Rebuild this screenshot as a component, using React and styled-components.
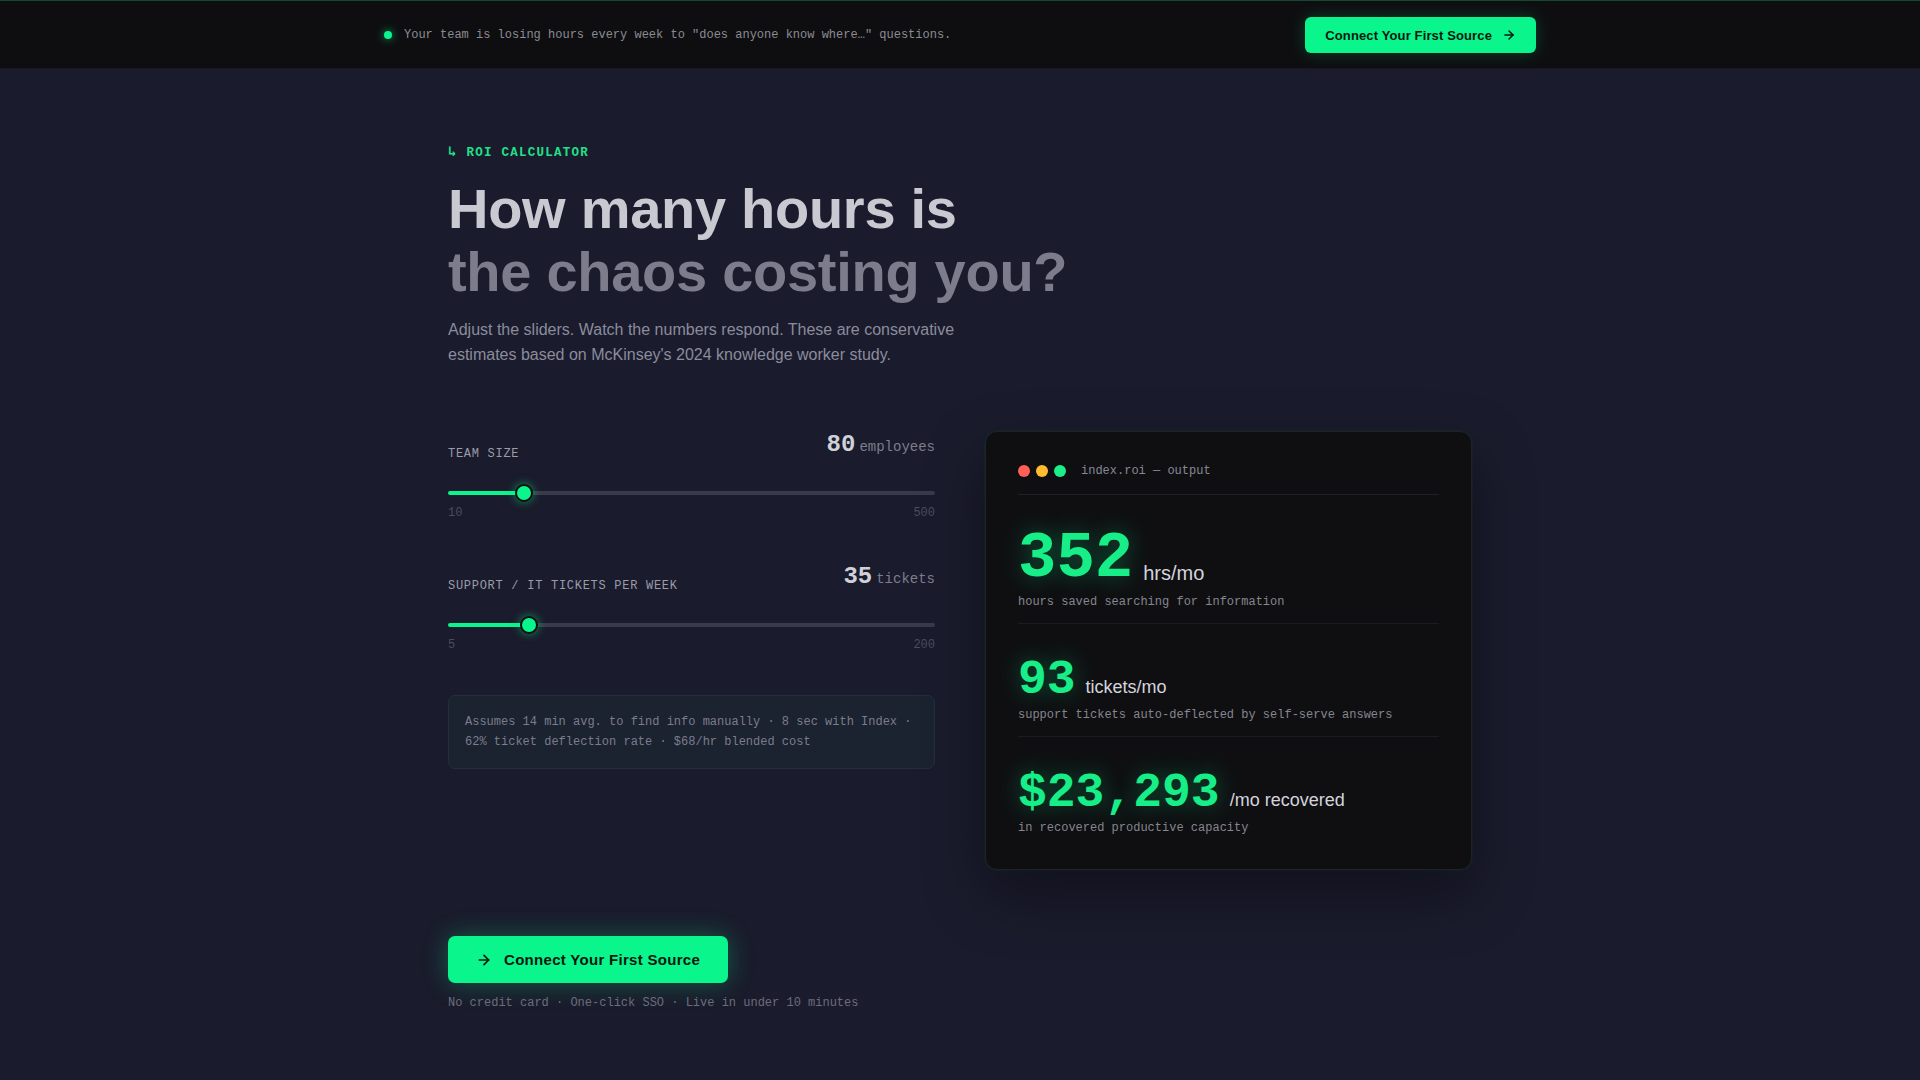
import React, { useState } from 'react';
import styled, { createGlobalStyle } from 'styled-components';
import { ArrowRight } from 'lucide-react';

const MONO = `"Liberation Mono", "DejaVu Sans Mono", monospace`;
const SANS = `"Liberation Sans", Arial, sans-serif`;
const GREEN = '#0af58b';

const GlobalStyle = createGlobalStyle`
    * { box-sizing: border-box; }
    html, body {
        margin: 0;
        padding: 0;
        background: #1a1b2c;
        font-family: ${SANS};
        min-height: 100%;
    }
`;

const Page = styled.div`
    min-height: 100vh;
    background: #1a1b2c;
`;

const TopBar = styled.header`
    background: #0e0e10;
    border-top: 1px solid #124a30;
    border-bottom: 1px solid #16171f;
    padding: 16px 0 15px;
`;

const TopInner = styled.div`
    max-width: 1152px;
    margin: 0 auto;
    display: flex;
    align-items: center;
    justify-content: space-between;
`;

const Notice = styled.div`
    display: flex;
    align-items: center;
    gap: 12px;
    font-family: ${MONO};
    font-size: 12px;
    color: #8b8b93;
`;

const LiveDot = styled.span`
    width: 8px;
    height: 8px;
    border-radius: 50%;
    background: ${GREEN};
    box-shadow: 0 0 8px rgba(10, 245, 139, 0.7);
`;

const Button = styled.button`
    display: inline-flex;
    align-items: center;
    flex-direction: ${(p) => (p.$iconFirst ? 'row-reverse' : 'row')};
    gap: ${(p) => (p.$large ? '12px' : '10px')};
    height: ${(p) => (p.$large ? '47px' : '36px')};
    padding: 0 ${(p) => (p.$large ? '28px' : '20px')};
    border: none;
    border-radius: ${(p) => (p.$large ? '7px' : '6px')};
    background: ${GREEN};
    color: #06180f;
    font-family: ${SANS};
    font-weight: 700;
    font-size: ${(p) => (p.$large ? '15px' : '13px')};
    letter-spacing: ${(p) => (p.$large ? '0.02em' : '0.01em')};
    cursor: pointer;
    box-shadow: 0 0 ${(p) => (p.$large ? '26px' : '16px')} rgba(10, 245, 139, ${(p) => (p.$large ? 0.3 : 0.22)});
`;

const Main = styled.main`
    max-width: 1024px;
    margin: 0 auto;
    padding: 73px 0 80px;
`;

const Eyebrow = styled.div`
    font-family: ${MONO};
    font-weight: 700;
    font-size: 12.5px;
    line-height: 18px;
    letter-spacing: 0.1em;
    color: #22e08a;
    margin-bottom: 16px;
`;

const EyebrowArrow = styled.span`
    font-family: "DejaVu Sans Mono", "DejaVu Sans", monospace;
    font-weight: 700;
    font-size: 14px;
`;

const Heading = styled.h1`
    margin: 0;
    font-family: ${SANS};
    font-weight: 700;
    font-size: 56px;
    line-height: 1.12;
    letter-spacing: -0.005em;
    color: #c9c9d2;
`;

const Dim = styled.span`
    display: block;
    color: #7c7c8c;
`;

const Lead = styled.p`
    margin: 15px 0 0;
    max-width: 540px;
    font-size: 16px;
    line-height: 1.55;
    color: #8b8c9c;
`;

const Grid = styled.div`
    display: grid;
    grid-template-columns: 1fr 1fr;
    gap: 50px;
    align-items: start;
    margin-top: 63px;
`;

const Controls = styled.div`
    display: flex;
    flex-direction: column;
    gap: 42px;
`;

const Field = styled.div``;

const FieldHead = styled.div`
    display: flex;
    justify-content: space-between;
    align-items: flex-end;
    height: 32px;
`;

const FieldLabel = styled.label`
    font-family: ${MONO};
    font-size: 12px;
    line-height: 18px;
    letter-spacing: 0.06em;
    color: #9b9caa;
`;

const Value = styled.div`
    font-family: ${MONO};
    line-height: 32px;
    white-space: nowrap;
`;

const ValueNum = styled.span`
    font-size: 24px;
    font-weight: 700;
    color: #d0d0d8;
`;

const ValueUnit = styled.span`
    font-size: 14px;
    color: #7d7e8c;
    margin-left: 4px;
`;

const Range = styled.input`
    -webkit-appearance: none;
    appearance: none;
    display: block;
    width: 100%;
    height: 18px;
    margin: 21px 0 0;
    background: transparent;
    cursor: pointer;

    &::-webkit-slider-runnable-track {
        height: 4px;
        border-radius: 2px;
        background: linear-gradient(
            to right,
            ${GREEN} calc(9px + (100% - 18px) * var(--p)),
            #393a4a calc(9px + (100% - 18px) * var(--p))
        );
    }
    &::-webkit-slider-thumb {
        -webkit-appearance: none;
        width: 18px;
        height: 18px;
        margin-top: -7px;
        border-radius: 50%;
        background: ${GREEN};
        border: 2px solid #0c0f10;
        box-shadow: 0 0 10px rgba(10, 245, 139, 0.55);
    }
    &:focus { outline: none; }
`;

const Bounds = styled.div`
    display: flex;
    justify-content: space-between;
    margin-top: 3px;
    font-family: ${MONO};
    font-size: 12px;
    line-height: 16px;
    color: #4b4c5d;
`;

const Assumptions = styled.div`
    margin-top: 0;
    padding: 16px;
    background: #1b2230;
    border: 1px solid #242e3c;
    border-radius: 7px;
    font-family: ${MONO};
    font-size: 12px;
    line-height: 20px;
    color: #7b7d8c;
`;

const Card = styled.section`
    padding: 32px;
    background: #0f0f12;
    border: 1px solid #1b2623;
    border-radius: 12px;
    box-shadow: 0 0 0 1px rgba(10, 245, 139, 0.03), 0 24px 60px rgba(0, 0, 0, 0.35);
`;

const CardHead = styled.div`
    display: flex;
    align-items: center;
    gap: 15px;
    padding-bottom: 16px;
    border-bottom: 1px solid #1f2028;
`;

const Lights = styled.div`
    display: flex;
    gap: 6px;
`;

const Light = styled.span`
    width: 12px;
    height: 12px;
    border-radius: 50%;
    background: ${(p) => p.$color};
`;

const CardTitle = styled.span`
    font-family: ${MONO};
    font-size: 12px;
    line-height: 14px;
    color: #878897;
`;

const Metric = styled.div`
    padding: 32px 0 12px;
    border-bottom: 1px solid #1b1c23;
    &:last-child {
        border-bottom: none;
        padding-bottom: 0;
    }
`;

const Figure = styled.div`
    display: flex;
    align-items: baseline;
    gap: 10px;
`;

const FigureNum = styled.span`
    font-family: ${MONO};
    font-weight: 700;
    font-size: ${(p) => (p.$big ? '64px' : '48px')};
    line-height: 1;
    color: #17ee88;
    text-shadow: 0 0 22px rgba(10, 245, 139, 0.35);
`;

const FigureUnit = styled.span`
    font-family: ${SANS};
    font-size: ${(p) => (p.$big ? '20px' : '18px')};
    line-height: 1;
    color: #d4d4dc;
    align-self: ${(p) => (p.$big ? 'flex-end' : 'auto')};
    margin-bottom: ${(p) => (p.$big ? '8px' : '0')};
`;

const FigureNote = styled.div`
    margin-top: 2px;
    font-family: ${MONO};
    font-size: 12px;
    line-height: 18px;
    color: #85868f;
`;

const Cta = styled.div`
    margin-top: 66px;
`;

const CtaNote = styled.div`
    margin-top: 12px;
    font-family: ${MONO};
    font-size: 12px;
    line-height: 16px;
    color: #6c6d7c;
`;

const Slider = ({ label, unit, min, max, value, onChange }) => {
    const p = (value - min) / (max - min);
    return (
        <Field>
            <FieldHead>
                <FieldLabel>{label}</FieldLabel>
                <Value>
                    <ValueNum>{value}</ValueNum>
                    <ValueUnit>{unit}</ValueUnit>
                </Value>
            </FieldHead>
            <Range
                type="range"
                min={min}
                max={max}
                value={value}
                onChange={(e) => onChange(Number(e.target.value))}
                style={{ '--p': p }}
            />
            <Bounds>
                <span>{min}</span>
                <span>{max}</span>
            </Bounds>
        </Field>
    );
};

const App = () => {
    const [team, setTeam] = useState(80);
    const [tickets, setTickets] = useState(35);

    // 14 min -> 8 sec per lookup, ~19 lookups a month per person
    const hours = Math.round(team * 4.4);
    const deflected = Math.round(tickets * 4.3 * 0.62);
    const dollars = Math.round(team * 4.4 * 68 * 0.97314);

    return (
        <Page>
            <GlobalStyle />
            <TopBar>
                <TopInner>
                    <Notice>
                        <LiveDot />
                        Your team is losing hours every week to "does anyone know where…" questions.
                    </Notice>
                    <Button>
                        Connect Your First Source
                        <ArrowRight size={14} strokeWidth={2.5} />
                    </Button>
                </TopInner>
            </TopBar>

            <Main>
                <Eyebrow>
                    <EyebrowArrow>↳</EyebrowArrow> ROI CALCULATOR
                </Eyebrow>
                <Heading>
                    How many hours is
                    <Dim>the chaos costing you?</Dim>
                </Heading>
                <Lead>
                    Adjust the sliders. Watch the numbers respond. These are conservative estimates based on
                    McKinsey's 2024 knowledge worker study.
                </Lead>

                <Grid>
                    <Controls>
                        <Slider label="TEAM SIZE" unit="employees" min={10} max={500} value={team} onChange={setTeam} />
                        <Slider
                            label="SUPPORT / IT TICKETS PER WEEK"
                            unit="tickets"
                            min={5}
                            max={200}
                            value={tickets}
                            onChange={setTickets}
                        />
                        <Assumptions>
                            Assumes 14 min avg. to find info manually · 8 sec with Index · 62% ticket deflection rate ·
                            $68/hr blended cost
                        </Assumptions>
                    </Controls>

                    <Card>
                        <CardHead>
                            <Lights>
                                <Light $color="#ff5f57" />
                                <Light $color="#febc2e" />
                                <Light $color="#1aef8a" />
                            </Lights>
                            <CardTitle>index.roi — output</CardTitle>
                        </CardHead>
                        <Metric>
                            <Figure>
                                <FigureNum $big>{hours}</FigureNum>
                                <FigureUnit $big>hrs/mo</FigureUnit>
                            </Figure>
                            <FigureNote>hours saved searching for information</FigureNote>
                        </Metric>
                        <Metric>
                            <Figure>
                                <FigureNum>{deflected}</FigureNum>
                                <FigureUnit>tickets/mo</FigureUnit>
                            </Figure>
                            <FigureNote>support tickets auto-deflected by self-serve answers</FigureNote>
                        </Metric>
                        <Metric>
                            <Figure>
                                <FigureNum>${dollars.toLocaleString('en-US')}</FigureNum>
                                <FigureUnit>/mo recovered</FigureUnit>
                            </Figure>
                            <FigureNote>in recovered productive capacity</FigureNote>
                        </Metric>
                    </Card>
                </Grid>

                <Cta>
                    <Button $large $iconFirst>
                        Connect Your First Source
                        <ArrowRight size={16} strokeWidth={2.5} />
                    </Button>
                    <CtaNote>No credit card · One-click SSO · Live in under 10 minutes</CtaNote>
                </Cta>
            </Main>
        </Page>
    );
};

export default App;
